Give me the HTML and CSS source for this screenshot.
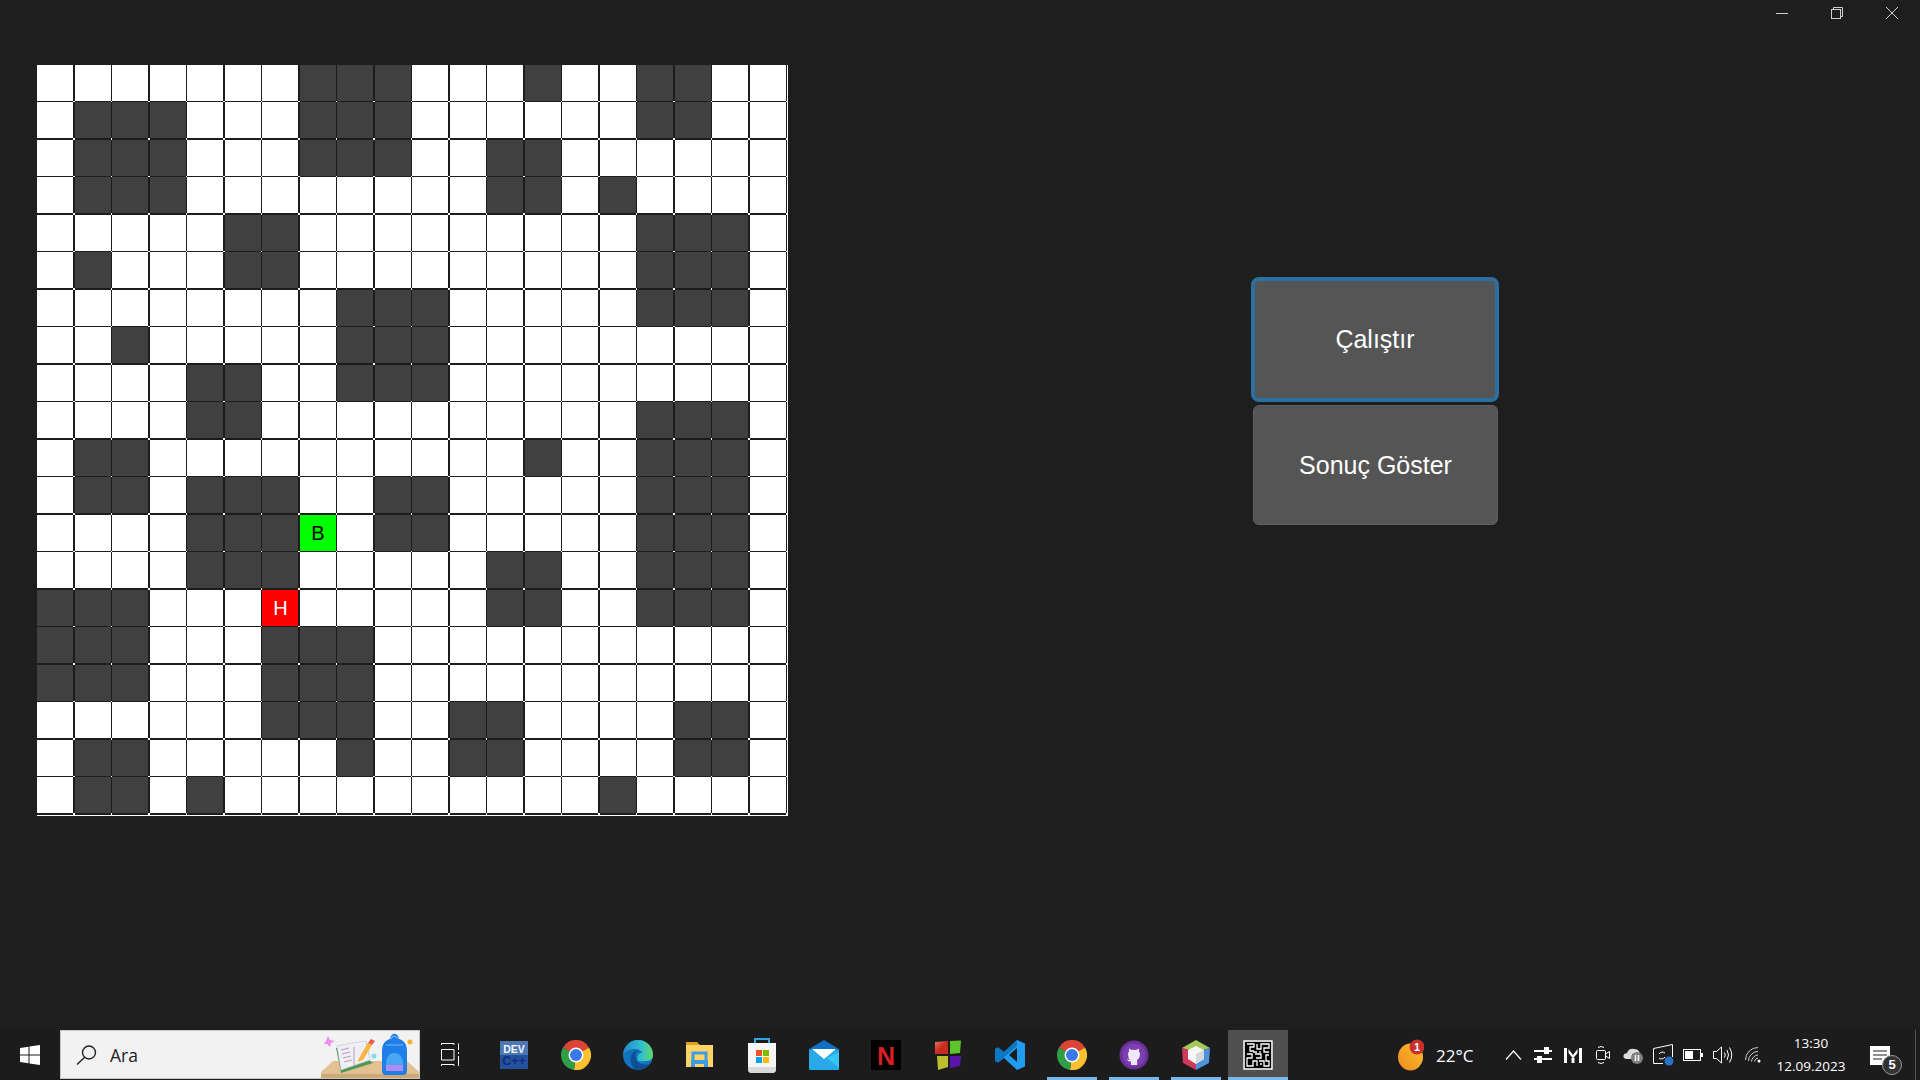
FILE: index.html
```html
<!DOCTYPE html>
<html lang="tr">
<head>
    <meta charset="UTF-8">
    <title>Labirent</title>
    <link rel="stylesheet" href="styles.css">
</head>
<body>
    <div class="title_bar">
        <div class="win_btn">
            <svg width="12" height="12" viewBox="0 0 12 12"><path d="M0 6.5H12" stroke="#d0d0d0"/></svg>
        </div>
        <div class="win_btn">
            <svg width="12" height="12" viewBox="0 0 12 12" fill="none" stroke="#d0d0d0"><rect x="0.5" y="2.5" width="9" height="9"/><path d="M2.5 2.5V0.5H11.5V9.5H9.5"/></svg>
        </div>
        <div class="win_btn">
            <svg width="12" height="12" viewBox="0 0 12 12" stroke="#d0d0d0"><path d="M0 0L12 12M12 0L0 12"/></svg>
        </div>
    </div>

    <div class="main">
        <div class="maze" id="maze"></div>
        <div class="actions">
            <button class="action focused">Çalıştır</button>
            <button class="action second">Sonuç Göster</button>
        </div>
    </div>

    <div class="taskbar">
        <div class="start">
            <svg width="20" height="20" viewBox="0 0 20 20" fill="#fff"><path d="M0 3L8.5 1.7V9.5H0zM9.5 1.5L20 0V9.5H9.5zM0 10.5H8.5V18.3L0 17zM9.5 10.5H20V20L9.5 18.5z"/></svg>
        </div>
        <div class="search">
            <svg class="search_icon" width="21" height="20" viewBox="0 0 21 20" fill="none" stroke="#222" stroke-width="1.4"><circle cx="13" cy="7.5" r="6.5"/><path d="M8.5 12.5L1 19.5"/></svg>
            <span class="search_text">Ara</span>
            <svg class="search_art" width="98" height="47" viewBox="0 0 98 47">
                <path d="M12 30H86L98 41V47H0V41z" fill="#e3c193"/>
                <path d="M0 43H98V47H0z" fill="#cda877"/>
                <path d="M7 5L9 9L14 10L10 12L9 16L6 13L3 13L5 10z" fill="#ee8cf0"/>
                <circle cx="53" cy="25" r="2.5" fill="#7fdcea"/>
                <circle cx="89" cy="11" r="2.5" fill="#ffb020"/>
                <path d="M15 17L20 42L52 32L48 29L46 12z" fill="#4c9a52"/>
                <path d="M16 15L30 12L45 10L49 29L20 39z" fill="#f1eef6" stroke="#c7bfd6" stroke-width="0.6"/>
                <path d="M20 19L28 17M21 23L29 21M22 27L30 25M23 31L31 29M33 16V34" stroke="#a9a5b5"/>
                <path d="M38 27L47 12L51 14L42 29L37 31z" fill="#f6b63c"/>
                <path d="M47 12L50 8L54 10L51 14z" fill="#ee5a4a"/>
                <path d="M61 40V20C61 12 65 9 69 8C70 1 77 1 78 8C82 9 86 12 86 20V40Q86 44 82 44H65Q61 44 61 40z" fill="#1f7fe8"/>
                <path d="M65 38C64 28 67 22 73 22C80 22 83 28 82 38z" fill="#4aa6f2"/>
                <path d="M65 34H82V40H65z" fill="#b08cf0"/>
                <path d="M70 8Q73 2 77 8" fill="none" stroke="#7fb6f5" stroke-width="1.2"/>
                <path d="M65 14H82" stroke="#7fb6f5" stroke-width="1"/>
            </svg>
        </div>
        <div class="task_view">
            <svg width="20" height="24" viewBox="0 0 20 24" fill="none" stroke="#fff"><path d="M0.5 0.5V2M0.5 0.5H13V2M0.5 6.5H13V17H0.5zM0.5 23V21.500H13V23M17.500 0.5V7M17.500 9V11M17.500 13V23"/></svg>
        </div>

        <div class="task_btn">
            <svg width="28" height="28" viewBox="0 0 28 28">
                <rect width="28" height="28" fill="#24509c"/>
                <rect width="28" height="14" fill="#4d78b4"/>
                <text x="14" y="12" class="icon_label" fill="#f4f6fb">DEV</text>
                <text x="14" y="24" class="icon_label big" fill="#0d2f7a">C++</text>
            </svg>
        </div>
        <div class="task_btn">
            <svg width="30" height="30" viewBox="0 0 30 30"><use href="#chrome"/></svg>
        </div>
        <div class="task_btn">
            <svg width="30" height="30" viewBox="0 0 30 30">
                <defs>
                    <linearGradient id="edge_top" x1="0" y1="0.6" x2="1" y2="0.6">
                        <stop offset="0" stop-color="#1e88c9"/>
                        <stop offset="0.6" stop-color="#32bdd1"/>
                        <stop offset="1" stop-color="#5fd86a"/>
                    </linearGradient>
                </defs>
                <circle cx="15" cy="15" r="15" fill="#1272bd"/>
                <path d="M0 15C1 6 7 0 15 0C24 0 30 7 30 15C30 19 27 21 23 21H15C13 16 16 12 20 13C16 7 5 8 0 15z" fill="url(#edge_top)"/>
                <path d="M8 22C6 15 11 10 16 10C12 12 11 17 15 22C18 25 24 26 28 23C24 28 19 30 15 30C12 30 9 27 8 22z" fill="#0d4f94"/>
                <path d="M15 21C18 22 22 21 24 21C21 23 17 23 15 21z" fill="#1e88c9"/>
            </svg>
        </div>
        <div class="task_btn">
            <svg width="28" height="30" viewBox="0 0 28 30">
                <path d="M0 2H11L14 5V9H0z" fill="#e0a21c"/>
                <path d="M0 5H27V27H0z" fill="#fcd364"/>
                <path d="M7 20V13H20V20" fill="none" stroke="#3d9be0" stroke-width="3"/>
                <path d="M5 27V20H22V27H18V24H9V27z" fill="#3d9be0"/>
            </svg>
        </div>
        <div class="task_btn">
            <svg width="30" height="36" viewBox="0 0 30 36">
                <path d="M8 8V2H22V8" fill="none" stroke="#2aa6e8" stroke-width="2"/>
                <path d="M1 6H29V32Q29 36 25 36H5Q1 36 1 32z" fill="#f6f6f6"/>
                <path d="M1 30H29V32Q29 36 25 36H5Q1 36 1 32z" fill="#d9d9d9"/>
                <rect x="9" y="13" width="6" height="6" fill="#f25022"/>
                <rect x="16" y="13" width="6" height="6" fill="#7fba00"/>
                <rect x="9" y="20" width="6" height="6" fill="#00a4ef"/>
                <rect x="16" y="20" width="6" height="6" fill="#ffb900"/>
            </svg>
        </div>
        <div class="task_btn">
            <svg width="30" height="30" viewBox="0 0 30 30">
                <path d="M0 9L15 0L30 9V30H0z" fill="#1170c4"/>
                <path d="M0 10H30V28Q30 30 28 30H2Q0 30 0 28z" fill="#29a9ea"/>
                <path d="M30 12V28L18 18z" fill="#36c6f4"/>
                <path d="M3 9H27L15 19z" fill="#fff"/>
            </svg>
        </div>
        <div class="task_btn">
            <svg width="30" height="30" viewBox="0 0 30 30">
                <rect width="30" height="30" fill="#000"/>
                <text x="15" y="25" class="icon_label netflix" fill="#d81f26">N</text>
            </svg>
        </div>
        <div class="task_btn">
            <svg width="28" height="30" viewBox="0 0 28 30">
                <defs>
                    <linearGradient id="red_pane" x1="0" y1="0" x2="1" y2="1">
                        <stop offset="0" stop-color="#e2746a"/>
                        <stop offset="0.5" stop-color="#c62d1f"/>
                    </linearGradient>
                </defs>
                <path d="M1 2L14 1V14H1z" fill="url(#red_pane)"/>
                <path d="M16 1L27 0.500L26 13L16 14z" fill="#5ec42a"/>
                <path d="M3 16H14V27L4 30z" fill="#bcbd30"/>
                <path d="M16 16H27L26 26L16 28z" fill="#5a15a8"/>
            </svg>
        </div>
        <div class="task_btn">
            <svg width="30" height="30" viewBox="0 0 30 30">
                <path d="M22 0L30 3.500V26.500L22 30L9 18L3 22.500L0 21V9L3 7.500L9 12zM22 8L14 15L22 22z" fill="#1f9cf0"/>
                <path d="M22 0L9 12L3 7.500L0 9V21L3 22.500L22 6z" fill="#0b78c4"/>
            </svg>
        </div>
        <div class="task_btn running">
            <svg width="30" height="30" viewBox="0 0 30 30">
                <defs>
                    <g id="chrome">
                        <path d="M15 15L2 7.500A15 15 0 0 1 28 7.500z" fill="#db4437"/>
                        <path d="M15 15L28 7.500A15 15 0 0 1 13 29.900z" fill="#fbc02d"/>
                        <path d="M15 15L13 29.900A15 15 0 0 1 2 7.500z" fill="#2f9e44"/>
                        <circle cx="15" cy="15" r="7.500" fill="#fff"/>
                        <circle cx="15" cy="15" r="6" fill="#3b78e7"/>
                    </g>
                </defs>
                <use href="#chrome"/>
            </svg>
        </div>
        <div class="task_btn running">
            <svg width="30" height="30" viewBox="0 0 30 30">
                <circle cx="15" cy="15" r="14.500" fill="#6a3099"/>
                <circle cx="15" cy="15" r="11.500" fill="#7c3fb0"/>
                <path d="M12 25V21.500Q9 22 8 19Q10 20 11 20Q9 18 9 14Q9 12.500 10 11.500V8.500L13 10Q15 9.500 17 10L20 8.500V11.500Q21 12.500 21 14Q21 18 18 20Q18.500 21 18 25z" fill="#f0e6fa"/>
            </svg>
        </div>
        <div class="task_btn running">
            <svg width="28" height="30" viewBox="0 0 28 30">
                <path d="M14 0L28 8L14 12L0 8z" fill="#a4c85a"/>
                <path d="M0 8L14 12V30L1 23z" fill="#cf3a58"/>
                <path d="M28 8L14 12V30L27 23z" fill="#4e92dc"/>
                <path d="M6 10L14 6L22 10V19L14 24L6 19z" fill="#f6f6f6"/>
                <path d="M14 14L22 10V19L14 24z" fill="#d4d8d8"/>
            </svg>
        </div>
        <div class="task_btn running active">
            <svg width="30" height="30" viewBox="0 0 30 30" fill="none" stroke="#fff" stroke-width="1.300">
                <rect width="30" height="30" fill="#000" stroke="none"/>
                <rect x="1" y="1" width="28" height="28" stroke-width="1.600"/>
                <path d="M4 4H11V7H7V11H11M14 4V9H18V4H26V8H21V12H26M4 14H9V18H4V26H10V21H14V26M12 14H18V18H13M16 21H21V26H26V21H23V15H26M17 11V13M19 24H17M14 12H10"/>
            </svg>
        </div>

        <div class="weather">
            <svg width="26" height="32" viewBox="0 0 26 32">
                <defs>
                    <linearGradient id="sun" x1="0" y1="1" x2="1" y2="0">
                        <stop offset="0" stop-color="#ee8a1e"/>
                        <stop offset="1" stop-color="#fbc02d"/>
                    </linearGradient>
                </defs>
                <ellipse cx="12.500" cy="18" rx="12.500" ry="13.500" fill="url(#sun)"/>
                <circle cx="19" cy="8" r="7.500" fill="#c9302c"/>
                <text x="19" y="12" class="icon_label badge" fill="#fff">1</text>
            </svg>
            <span class="temp">22°C</span>
        </div>
        <div class="tray">
            <div class="tray_item">
                <svg width="17" height="10" viewBox="0 0 17 10" fill="none" stroke="#fff" stroke-width="1.200"><path d="M1 9.500L8.500 1L16 9.500"/></svg>
            </div>
            <div class="tray_item">
                <svg width="18" height="16" viewBox="0 0 18 16" fill="#fff"><path d="M0 3H18V5H0zM0 11H18V13H0z"/><rect x="10" y="0" width="5" height="7"/><rect x="3" y="9" width="5" height="7"/></svg>
            </div>
            <div class="tray_item">
                <svg width="18" height="16" viewBox="0 0 18 16" fill="#fff"><path d="M0 1H3V16H0zM15 1H18V16H15zM4.500 2L9 8L13.500 2V6L9 11.500L4.500 6zM7.500 11H10.500V16H7.500z"/></svg>
            </div>
            <div class="tray_item">
                <svg width="14" height="20" viewBox="0 0 14 20" fill="none" stroke="#fff"><rect x="0.500" y="5.500" width="9" height="9" rx="1"/><path d="M9.500 9L13.500 6.500V13.500L9.500 11M2 2.500Q5 0.500 8 2.500M2 17.500Q5 19.500 8 17.500"/></svg>
            </div>
            <div class="tray_item">
                <svg width="20" height="18" viewBox="0 0 20 18">
                    <path d="M1 12Q-1 8 4 7Q6 2 11 3Q16 3 17 8H9V13H3z" fill="#dcdcdc"/>
                    <circle cx="14" cy="12" r="6" fill="#808080"/>
                    <path d="M12.500 9V15M15.500 9V15" stroke="#fff" stroke-width="1.500"/>
                </svg>
            </div>
            <div class="tray_item">
                <svg width="21" height="22" viewBox="0 0 21 22" fill="none" stroke="#fff">
                    <path d="M0.500 4.500L19.500 0.500V13M0.500 4.500V19.500H10"/>
                    <path d="M6 10A4 4 0 0 1 12 9M12 13A4 4 0 0 1 6 14"/>
                    <circle cx="16" cy="17" r="4.500" fill="#2a72c8" stroke="none"/>
                </svg>
            </div>
            <div class="tray_item">
                <svg width="20" height="12" viewBox="0 0 20 12"><rect x="0.500" y="0.500" width="17" height="11" fill="none" stroke="#fff"/><rect x="2" y="2" width="8" height="8" fill="#fff"/><rect x="18" y="4" width="2" height="4" fill="#fff"/></svg>
            </div>
            <div class="tray_item">
                <svg width="20" height="18" viewBox="0 0 20 18" fill="none" stroke="#fff"><path d="M0.500 5.500H3.500L8.500 1V17L3.500 12.500H0.500zM11.500 6.500Q13 9 11.500 11.500M14 4Q17 9 14 14M16.500 1.500Q21 9 16.500 16.500"/></svg>
            </div>
            <div class="tray_item">
                <svg width="16" height="16" viewBox="0 0 16 16" fill="none" stroke="#cfcfcf"><path d="M0.500 13A12.500 12.500 0 0 1 13 0.500M3.500 14A9.500 9.500 0 0 1 13 4.500M6.500 14.500A7 7 0 0 1 13 8M9.500 14.500A4 4 0 0 1 13 11"/><circle cx="14" cy="14" r="1.500" fill="#fff" stroke="none"/></svg>
            </div>
        </div>
        <div class="clock">
            <div>13:30</div>
            <div>12.09.2023</div>
        </div>
        <div class="notify">
            <svg width="20" height="19" viewBox="0 0 20 19"><path d="M0 0H20V19H0z" fill="#fff"/><path d="M3 5H17M3 9H17M3 13H12" stroke="#222" stroke-width="1.200"/></svg>
            <span class="notify_count">5</span>
        </div>
    </div>

    <script src="script.js"></script>
</body>
</html>
```

FILE: styles.css
```css
*{
    margin:0;
    padding:0;
    box-sizing: border-box;
}
body{
    display: flex;
    flex-direction: column;
    height: 100vh;
    overflow: hidden;
    background:#1e1e1e;
    font-family: "Liberation Sans", Arial, sans-serif;
    color:#fff;
}

/* pencere butonlari */
.title_bar{
    display: flex;
    justify-content: flex-end;
    height: 26px;
    padding-right:1px;
}
.win_btn{
    display: flex;
    align-items: center;
    justify-content: center;
    width:55px;
}

.main{
    flex:1;
    display: flex;
    align-items: flex-start;
    padding:38.75px 0 0 37px;
}

/* labirent */
.maze{
    display: grid;
    grid-template-columns: repeat(20,36px);
    grid-auto-rows: 36px;
    gap:1.5px;
    padding:0 2.5px 2.5px 0;
    background:#fff;
}
.cell{
    position: relative;
    display: flex;
    align-items: center;
    justify-content: center;
    padding:1px 0 0 1px;
    background:#fff;
    font-size:20px;
}
.cell:before,.cell:after{
    content:"";
    position: absolute;
    background:#1c1c1c;
}
.cell:before{
    top:0;
    bottom:0;
    left:100%;
    width:1.5px;
}
.cell:after{
    left:0;
    right:0;
    top:100%;
    height:1.5px;
}
.cell.wall{
    background:#404040;
}
.cell.start_cell{
    background:#00ff00;
    color:#000;
}
.cell.end_cell{
    background:#ff0000;
    color:#fff;
}

/* butonlar */
.actions{
    display: flex;
    flex-direction: column;
    margin:212.25px 0 0 463px;
}
.action{
    border-radius:6px;
    background:#555;
    color:#fff;
    font-family: inherit;
    font-size:25px;
}
.action.focused{
    width:248px;
    height:125px;
    border:4px solid #2a70a0;
    border-radius:8px;
}
.action.second{
    width:245px;
    height:120px;
    margin:3px 0 0 2px;
    border:1px solid #5f5f5f;
}

/* gorev cubugu */
.taskbar{
    display: flex;
    align-items: center;
    height: 50px;
    background:#1c1c1c;
}
.start{
    display: flex;
    align-items: center;
    justify-content: center;
    width:60px;
    height: 100%;
}
.search{
    display: flex;
    align-items: center;
    width:360px;
    height: 49px;
    margin-bottom:1px;
    padding-left:15px;
    background:#f2f2f2;
    border:1px solid #c8c8c8;
}
.search_text{
    margin-left:13px;
    font-family: "Open Sans", sans-serif;
    font-size:17.5px;
    color:#222;
}
.search_art{
    margin-left:auto;
    align-self: flex-end;
}
.task_view{
    display: flex;
    align-items: center;
    justify-content: center;
    width:63px;
    height: 100%;
    padding-right:2px;
}
.task_btn{
    position: relative;
    display: flex;
    align-items: center;
    justify-content: center;
    width:60px;
    height: 100%;
    margin:0 1px;
}
.task_btn.running:after{
    content:"";
    position: absolute;
    left:5px;
    right:5px;
    bottom:0;
    height: 3px;
    background:#76b9ed;
}
.task_btn.active{
    background:#505050;
}
.task_btn.active:after{
    left:0;
    right:0;
}
.icon_label{
    font-family: "Liberation Sans", sans-serif;
    font-size:10.5px;
    font-weight: bold;
    text-anchor: middle;
}
.icon_label.big{
    font-size:12.5px;
}
.icon_label.netflix{
    font-size:25px;
}
.icon_label.badge{
    font-size:11px;
}
.weather{
    display: flex;
    align-items: center;
    gap:12px;
    width:110px;
    margin-left:auto;
    padding-left:10px;
}
.temp{
    font-family: "Open Sans", sans-serif;
    font-size:17px;
}
.tray{
    display: flex;
}
.tray_item{
    display: flex;
    align-items: center;
    justify-content: center;
    width:30px;
}
.clock{
    width:86px;
    font-family: "Open Sans", sans-serif;
    font-size:13.5px;
    line-height: 23px;
    text-align: center;
}
.notify{
    position: relative;
    display: flex;
    justify-content: center;
    width:52px;
}
.notify_count{
    position: absolute;
    left:28px;
    top:9px;
    display: flex;
    align-items: center;
    justify-content: center;
    width:20px;
    height: 20px;
    border:1px solid #999;
    border-radius:50%;
    background:#333;
    font-size:13px;
    font-weight: bold;
}
.taskbar:after{
    content:"";
    width:1px;
    height: 100%;
    margin:0 4px 0 9px;
    background:#555;
}
```

FILE: script.js
```js
// # duvar, B baslangic, H hedef
var rows=[
    ".......###...#..##..",
    ".###...###......##..",
    ".###...###..##......",
    ".###........##.#....",
    ".....##.........###.",
    ".#...##.........###.",
    "........###.....###.",
    "..#.....###.........",
    "....##..###.........",
    "....##..........###.",
    ".##..........#..###.",
    ".##.###..##.....###.",
    "....###B.##.....###.",
    "....###.....##..###.",
    "###...H.....##..###.",
    "###...###...........",
    "###...###...........",
    "......###..##....##.",
    ".##.....#..##....##.",
    ".##.#..........#....."
];

var maze=document.getElementById("maze");
for(var r=0;r<20;r++){
    for(var c=0;c<20;c++){
        var ch=rows[r].charAt(c);
        var cell=document.createElement("div");
        cell.className="cell";
        if(ch=="#"){
            cell.className+=" wall";
        }else if(ch=="B"){
            cell.className+=" start_cell";
            cell.textContent="B";
        }else if(ch=="H"){
            cell.className+=" end_cell";
            cell.textContent="H";
        }
        maze.appendChild(cell);
    }
}
```
